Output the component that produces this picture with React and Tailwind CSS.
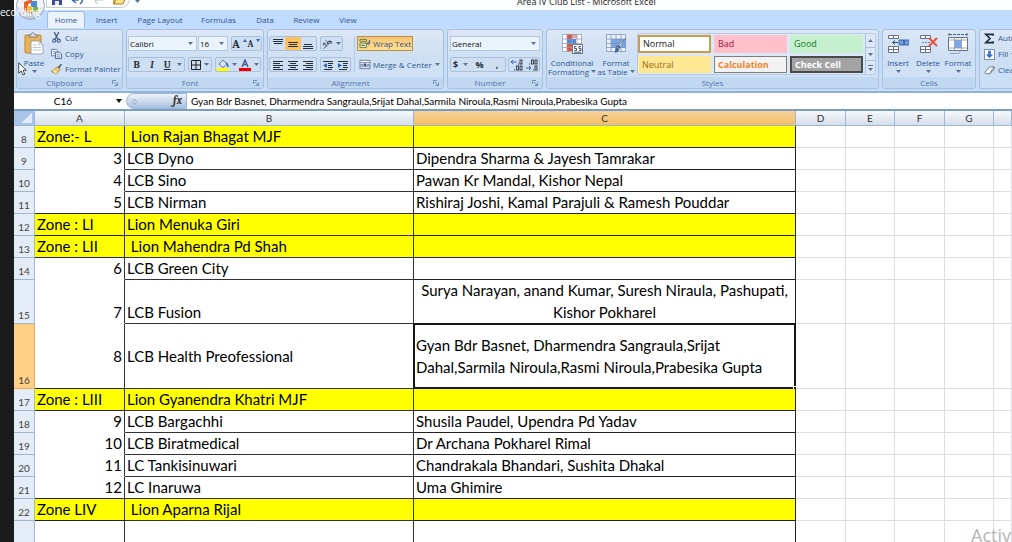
import React from "react";

const zones = [
  { n: 8, zone: true, a: "Zone:- L", b: " Lion Rajan Bhagat MJF", c: "" },
  { n: 9, a: "3", b: "LCB Dyno", c: "Dipendra Sharma & Jayesh Tamrakar" },
  { n: 10, a: "4", b: "LCB Sino", c: "Pawan Kr Mandal, Kishor Nepal" },
  { n: 11, a: "5", b: "LCB Nirman", c: "Rishiraj Joshi, Kamal Parajuli & Ramesh Pouddar", last: true },
  { n: 12, zone: true, a: "Zone : LI", b: "Lion Menuka Giri", c: "" },
  { n: 13, zone: true, a: "Zone : LII", b: " Lion Mahendra Pd Shah", c: "" },
  { n: 14, a: "6", b: "LCB Green City", c: "" },
  { n: 15, a: "7", b: "LCB Fusion", c: "Surya Narayan, anand Kumar, Suresh Niraula, Pashupati, Kishor Pokharel", tall: "h-[44px]", center: true },
  { n: 16, a: "8", b: "LCB Health Preofessional", c: "Gyan Bdr Basnet, Dharmendra Sangraula,Srijat Dahal,Sarmila Niroula,Rasmi Niroula,Prabesika Gupta", tall: "h-[65px]", active: true, last: true },
  { n: 17, zone: true, a: "Zone : LIII", b: "Lion Gyanendra Khatri MJF", c: "" },
  { n: 18, a: "9", b: "LCB Bargachhi", c: "Shusila Paudel, Upendra Pd Yadav" },
  { n: 19, a: "10", b: "LCB Biratmedical", c: "Dr Archana Pokharel Rimal" },
  { n: 20, a: "11", b: "LC Tankisinuwari", c: "Chandrakala Bhandari, Sushita Dhakal" },
  { n: 21, a: "12", b: "LC Inaruwa", c: "Uma Ghimire", last: true },
  { n: 22, zone: true, a: "Zone LIV", b: " Lion Aparna Rijal", c: "" },
  { n: "", a: "", b: "", c: "", tall: "h-[44px]" },
];

function Caret({ className = "" }) {
  return (
    <svg viewBox="0 0 5 3" className={`h-[3px] w-[5px] shrink-0 ${className}`} aria-hidden="true">
      <path d="M0 0h5L2.500 3z" fill="#5c7196" />
    </svg>
  );
}

function Group({ label, className, launcher, children }) {
  return (
    <section
      aria-label={label}
      className={`flex shrink-0 flex-col overflow-hidden rounded-[3px] border border-[#a6c0e0] bg-gradient-to-b from-[#dbe7f6] via-[#cddff3] to-[#d3e4f8] ${className}`}
    >
      <div className="flex min-h-0 flex-1">{children}</div>
      <div className="flex h-[11px] items-center bg-[#c1d8f1] text-[#5576aa]">
        <span className="flex-1 text-center leading-[11px]">{label}</span>
        {launcher && (
          <button aria-label={`${label} options`} className="mr-1">
            <svg viewBox="0 0 6 6" className="h-[6px] w-[6px]">
              <path d="M.5 4V.5H4M2 2l3 3M5.500 2.500v3h-3" fill="none" stroke="#7590b8" />
            </svg>
          </button>
        )}
      </div>
    </section>
  );
}

function Box({ className = "", children }) {
  return (
    <div className={`flex h-[15px] shrink-0 items-stretch rounded-[2px] border border-[#a9bfdc] bg-[#cfdff2] ${className}`}>
      {children}
    </div>
  );
}

function Tool({ label, className = "", children }) {
  return (
    <button aria-label={label} className={`flex flex-1 items-center justify-center gap-[3px] ${className}`}>
      {children}
    </button>
  );
}

function Lines({ rows }) {
  return (
    <svg viewBox="0 0 12 12" className="h-[12px] w-[12px]" aria-hidden="true">
      {rows.map(([x, y, w]) => (
        <rect key={y} x={x} y={y} width={w} height="1" fill="#25303f" />
      ))}
    </svg>
  );
}

function Indent({ flip }) {
  return (
    <svg viewBox="0 0 12 12" className="h-[12px] w-[12px]" aria-hidden="true">
      <path d="M1 2.500h10M6 4.500h5M6 6.500h4M6 8.500h5M2 10.500h8" stroke="#25303f" fill="none" />
      <path d={flip ? "M1 4l4 2.500L1 9z" : "M5 4L1 6.500 5 9z"} fill="#3563b5" />
    </svg>
  );
}

function SheetIcon({ kind }) {
  return (
    <svg viewBox="0 0 22 22" className="h-[22px] w-[22px]" aria-hidden="true">
      {kind === "cond" && (
        <>
          <rect x="1.500" y="1.500" width="19" height="17" fill="#fff" />
          <path d="M6 1h5v5H6zM6 11h5v7H6z" fill="#e4513f" />
          <path d="M6 6h9v5H6z" fill="#4f86dc" />
          <path d="M11 1h5v4h-5zM11 14h4v4h-4z" fill="#f0a297" />
          <path d="M1.500 1.500h19v17h-19zM1.500 6h19M1.500 10.500h19M1.500 14.500h19M6 1.500v17M11 1.500v17M16 1.500v17" fill="none" stroke="#909db8" strokeWidth=".8" />
          <rect x="11.500" y="11.500" width="10" height="9" fill="#fff" stroke="#69758b" />
          <path d="M15.500 13.500h-2v2h2v2h-2M20 13.500h-2v2h2v2h-2M13 19.200h7" fill="none" stroke="#333d50" strokeWidth=".9" />
        </>
      )}
      {kind === "table" && (
        <>
          <rect x="1.500" y="1.500" width="19" height="17" fill="#e9f1fb" />
          <path d="M6 6h15v9H6z" fill="#78a7e8" />
          <path d="M1.500 1.500h19v17h-19zM1.500 6h19M1.500 10.500h19M1.500 14.500h19M6 1.500v17M11 1.500v17M16 1.500v17" fill="none" stroke="#8095bb" strokeWidth=".8" />
          <path d="M21 5l-6 9-2-1z" fill="#e7e9ef" stroke="#66738b" strokeWidth=".7" />
          <path d="M15 13c0 4-2 6-5 7 0-3 0-6 3-8z" fill="#43689f" />
          <path d="M12 14l2 2" stroke="#d9a05c" />
        </>
      )}
      {kind === "insert" && (
        <>
          <path d="M1.500 2.500h10v3h-10zM6.500 2.500v3M1.500 13.500h10v6h-10zM6.500 13.500v6M1.500 16.500h10" fill="#fff" stroke="#63718a" />
          <path d="M12 7h10v5H12z" fill="#6f9be0" stroke="#3d68b2" />
          <path d="M11 9.500H6M8 7.500L5.500 9.500 8 11.500M17 7v5" fill="none" stroke="#31466d" />
        </>
      )}
      {kind === "delete" && (
        <>
          <path d="M3.500 2.500h10v3h-10zM8.500 2.500v3M3.500 13.500h10v6h-10zM8.500 13.500v6M3.500 16.500h10" fill="#fff" stroke="#63718a" />
          <path d="M5 9.500h9" stroke="#7184a5" strokeDasharray="2 1" />
          <path d="M12 5l8 8M20 5l-8 8" stroke="#ee4936" strokeWidth="1.800" />
        </>
      )}
      {kind === "format" && (
        <>
          <path d="M2 1.500h18M2 0v3M20 0v3" stroke="#535f74" strokeDasharray="3 1" />
          <path d="M1.500 4.500h19v13h-19z" fill="#fff" stroke="#63718a" />
          <path d="M8 7h6v8H8z" fill="#7ca6ec" />
          <path d="M1.500 7h19M1.500 15h19M7.500 4.500v13M14.500 4.500v13M3 20.500h9l1-2" fill="none" stroke="#8796b0" strokeWidth=".8" />
        </>
      )}
    </svg>
  );
}

function BigButton({ kind, lines, caretBelow, className }) {
  return (
    <button className={`flex flex-col items-center pt-[3px] leading-[9px] text-[#2f5591] ${className}`}>
      <SheetIcon kind={kind} />
      <span className="mt-[3px] whitespace-nowrap">{lines[0]}</span>
      {caretBelow ? (
        <Caret className="mt-[3px]" />
      ) : (
        <span className="flex items-center gap-[2px] whitespace-nowrap">
          {lines[1]}
          <Caret />
        </span>
      )}
    </button>
  );
}

function SmallButton({ icon, caret, children }) {
  return (
    <button className="flex h-[16px] items-center gap-[3px] whitespace-nowrap text-[#2f5591]">
      <svg viewBox="0 0 12 12" className="h-[11px] w-[11px]" aria-hidden="true">{icon}</svg>
      {children}
      {caret && <Caret />}
    </button>
  );
}

function Combo({ label, value, options, className }) {
  return (
    <label className={`relative flex h-[15px] shrink-0 items-center border border-[#b4c8e2] bg-[#eaf2fb] ${className}`}>
      <span className="sr-only">{label}</span>
      <select defaultValue={value} className="h-full w-full appearance-none bg-transparent pl-px leading-[13px] text-[#111]">
        {options.map((o) => (
          <option key={o}>{o}</option>
        ))}
      </select>
      <Caret className="pointer-events-none absolute right-[3px]" />
    </label>
  );
}

function Decimals({ more }) {
  return (
    <svg viewBox="0 0 14 12" className="h-[12px] w-[14px]" aria-hidden="true">
      <g fill="none" stroke="#25303f" strokeWidth=".9">
        <rect x="10" y="1" width="2" height="4" />
        {!more && <rect x="6.500" y="1" width="2" height="4" />}
        <rect x="10" y="7" width="2" height="4" />
        {more && <rect x="6.500" y="7" width="2" height="4" />}
      </g>
      <path d={more ? "M8 4.500h1v1H8zM4 10.500h1v1H4z" : "M4 4.500h1v1H4zM8 10.500h1v1H8z"} fill="#25303f" />
      <path d={more ? "M6.500 3H1M3 1L1 3l2 2" : "M1 9h5M4 7l2 2-2 2"} fill="none" stroke="#3563b5" />
    </svg>
  );
}

const styles = [
  ["Normal", "bg-white text-[#222] border-2 border-[#c99c4c]"],
  ["Bad", "bg-[#ffc0cb] text-[#a8123a] border border-[#ffc0cb]"],
  ["Good", "bg-[#c6efce] text-[#137a2a] border border-[#c6efce]"],
  ["Neutral", "bg-[#ffe794] text-[#976b12] border border-[#ffe794]"],
  ["Calculation", "bg-[#f2f2f2] text-[#f5821f] font-bold border border-[#7f7f7f]"],
  ["Check Cell", "bg-[#a3a3a3] text-white font-bold border-2 border-[#4a4a4a]"],
];

function Ribbon() {
  return (
    <div className="flex h-[63px] shrink-0 gap-[3px] bg-[#c8dcf4] pb-[2px] pl-[2px] pt-px">
      <Group label="Clipboard" launcher className="w-[107px]">
        <button className="flex w-[34px] flex-col items-center pt-[2px] leading-[9px] text-[#2f5591]">
          <svg viewBox="0 0 20 23" className="h-[23px] w-[20px]" aria-hidden="true">
            <rect x="1" y="3" width="16" height="18" rx="1" fill="#e9b254" stroke="#b98133" />
            <path d="M5 5V3h2c0-3 4-3 4 0h2v2z" fill="#d8dce3" stroke="#6b7280" strokeWidth=".8" />
            <path d="M7 9h8l4 4v9H7z" fill="#fff" stroke="#8694ab" strokeWidth=".8" />
            <path d="M15 9v4h4M9 13h4M9 15.500h8M9 18h8" fill="none" stroke="#a9b6ca" strokeWidth=".8" />
          </svg>
          <span className="mt-[3px]">Paste</span>
          <Caret className="mt-[3px]" />
        </button>
        <div className="flex flex-col">
          <SmallButton icon={<><path d="M3.500 0l4 8M8.500 0l-4 8" stroke="#3a5688" strokeWidth="1.300" /><circle cx="3.500" cy="9.500" r="1.700" fill="none" stroke="#3b5f9f" strokeWidth="1.300" /><circle cx="8.500" cy="9.500" r="1.700" fill="none" stroke="#3b5f9f" strokeWidth="1.300" /></>}>Cut</SmallButton>
          <SmallButton icon={<><path d="M.5 1.500h5l2 2v5h-7z" fill="#fff" stroke="#5673a5" /><path d="M5 4.500h4l2.500 2v5H5z" fill="#e4edfa" stroke="#425f93" /><path d="M2 4h3M2 6h2M6.500 7.500h3M6.500 9.500h3" stroke="#6684b8" /></>}>Copy</SmallButton>
          <SmallButton icon={<><path d="M11.500 0L7 4l1.500 1.500z" fill="#5e6e96" stroke="#4a5875" /><path d="M7 3l3 3-4 5-6-3c3-1 4-3 7-5z" fill="#eac867" stroke="#9a7635" strokeWidth=".7" /><path d="M3 7l3 3" stroke="#fff6cf" strokeWidth="1.500" /></>}>Format Painter</SmallButton>
        </div>
      </Group>

      <Group label="Font" launcher className="w-[138px]">
        <div className="flex flex-col gap-[6px] pl-px pt-[6px]">
          <div className="flex gap-px">
            <Combo label="Font name" value="Calibri" options={["Calibri", "Arial", "Cambria"]} className="w-[69px]" />
            <Combo label="Font size" value="16" options={["11", "14", "16"]} className="w-[30px]" />
            <Box className="ml-[2px] w-[31px]">
              <Tool label="Grow font"><span className="font-serif text-[12px] font-bold leading-[12px] text-[#25303f]">A</span><svg viewBox="0 0 4 3" className="mb-[6px] h-[3px] w-[4px]"><path d="M0 3h4L2 0z" fill="#3563b5" /></svg></Tool>
              <Tool label="Shrink font"><span className="font-serif text-[9px] font-bold leading-[12px] text-[#25303f]">A</span><svg viewBox="0 0 4 3" className="mb-[6px] h-[3px] w-[4px]"><path d="M0 0h4L2 3z" fill="#3563b5" /></svg></Tool>
            </Box>
          </div>
          <div className="flex gap-[3px] text-[#25303f]">
            <Box className="w-[57px] font-serif text-[10px] leading-[12px]">
              <Tool label="Bold"><b>B</b></Tool>
              <Tool label="Italic"><i className="font-bold">I</i></Tool>
              <Tool label="Underline"><u className="font-bold">U</u></Tool>
              <Tool label="Underline styles" className="max-w-[9px]"><Caret /></Tool>
            </Box>
            <Box className="w-[24px]">
              <Tool label="Borders">
                <svg viewBox="0 0 10 10" className="h-[10px] w-[10px]"><path d="M.5.5h9v9h-9zM5 .5v9M.5 5h9" fill="none" stroke="#222" /></svg>
                <Caret />
              </Tool>
            </Box>
            <Box className="w-[46px]">
              <Tool label="Fill color">
                <svg viewBox="0 0 12 12" className="h-[12px] w-[12px]"><path d="M2 5l4-4 4 4-4 3.500z" fill="#dce8f7" stroke="#5b76a6" /><path d="M9 4c2 1 2 2 2 4" stroke="#3467b4" strokeWidth="1.500" fill="none" /><rect y="9" width="12" height="3" fill="#ffff00" /></svg>
                <Caret />
              </Tool>
              <Tool label="Font color">
                <svg viewBox="0 0 12 12" className="h-[12px] w-[12px]"><path d="M3 8l3-7 3 7M4 5.500h4" fill="none" stroke="#3f5d92" strokeWidth="1.400" /><rect y="9" width="12" height="3" fill="#f00000" /></svg>
                <Caret />
              </Tool>
            </Box>
          </div>
        </div>
      </Group>

      <Group label="Alignment" launcher className="w-[177px]">
        <div className="flex flex-1 pl-px pt-[6px]">
          <div className="flex flex-col gap-[6px]">
            <div className="flex gap-[3px]">
              <Box className="w-[48px]">
                <Tool label="Top align"><Lines rows={[[1, 1, 10], [1, 3, 10], [2, 5, 8]]} /></Tool>
                <Tool label="Middle align" className="bg-[#ffc15f]"><Lines rows={[[1, 4, 10], [2, 6, 8], [1, 8, 10]]} /></Tool>
                <Tool label="Bottom align"><Lines rows={[[2, 6, 8], [1, 8, 10], [1, 10, 10]]} /></Tool>
              </Box>
              <Box className="w-[23px]">
                <Tool label="Orientation">
                  <svg viewBox="0 0 12 12" className="h-[12px] w-[11px]"><path d="M2 11l8-8M10 3v3M10 3H7M1 4.500l4 4M1.500 7.500c0-2 2-3 3-1.500M4 2l4 4M6 6c-1-2 2-4 3-2" fill="none" stroke="#33425c" /></svg>
                  <Caret />
                </Tool>
              </Box>
            </div>
            <div className="flex gap-[3px]">
              <Box className="w-[48px]">
                <Tool label="Align left"><Lines rows={[[1, 2, 10], [1, 4, 7], [1, 6, 10], [1, 8, 7], [1, 10, 10]]} /></Tool>
                <Tool label="Center"><Lines rows={[[1, 2, 10], [3, 4, 6], [1, 6, 10], [3, 8, 6], [1, 10, 10]]} /></Tool>
                <Tool label="Align right"><Lines rows={[[1, 2, 10], [4, 4, 7], [1, 6, 10], [4, 8, 7], [1, 10, 10]]} /></Tool>
              </Box>
              <Box className="w-[31px]">
                <Tool label="Decrease indent"><Indent /></Tool>
                <Tool label="Increase indent"><Indent flip /></Tool>
              </Box>
            </div>
          </div>
          <div className="ml-[3px] h-[36px] w-px bg-[#b3c8e4]" />
          <div className="ml-[2px] flex flex-col items-start gap-[6px] text-[#2f5591]">
            <button className="flex h-[15px] items-center gap-[2px] whitespace-nowrap border border-[#b98f4f] bg-gradient-to-b from-[#f6c472] to-[#ffe08d] px-px">
              <svg viewBox="0 0 12 12" className="h-[11px] w-[12px]" aria-hidden="true"><path d="M.5 1.500h7v2h-7zM.5 5.500h7v5h-7z" fill="#e9efb0" stroke="#667534" /><path d="M11 2v4H9M10 4L8.500 6 10 8M2 8h4" fill="none" stroke="#33518d" /></svg>
              Wrap Text
            </button>
            <button className="flex h-[15px] items-center gap-[2px] whitespace-nowrap pl-[2px]">
              <svg viewBox="0 0 12 12" className="h-[11px] w-[12px]" aria-hidden="true"><path d="M.5 1.500h11v9H.5zM.5 4h11M.5 8.500h11" fill="#fff" stroke="#6c7f9f" /><path d="M1 4.500h10v3.500H1z" fill="#c8dcf4" /><path d="M1 6.500h3M11 6.500H8" stroke="#234a98" /><path d="M5 8l1-3 1 3" stroke="#222" fill="none" /></svg>
              Merge &amp; Center
              <Caret className="ml-px" />
            </button>
          </div>
        </div>
      </Group>

      <Group label="Number" launcher className="w-[96px]">
        <div className="flex flex-col gap-[6px] pl-[2px] pt-[6px]">
          <Combo label="Number format" value="General" options={["General", "Number", "Currency"]} className="w-[90px]" />
          <div className="flex gap-[2px] text-[9px] font-bold leading-[12px] text-[#25303f]">
            <Box className="w-[56px]">
              <Tool label="Accounting format">$<Caret className="ml-[2px]" /></Tool>
              <Tool label="Percent style">%</Tool>
              <Tool label="Comma style" className="max-w-[16px]">,</Tool>
            </Box>
            <Box className="w-[32px]">
              <Tool label="Increase decimal"><Decimals more /></Tool>
              <Tool label="Decrease decimal"><Decimals /></Tool>
            </Box>
          </div>
        </div>
      </Group>

      <Group label="Styles" className="min-w-[333px] max-w-[333px]">
        <BigButton kind="cond" lines={["Conditional", "Formatting"]} className="w-[50px]" />
        <BigButton kind="table" lines={["Format", "as Table"]} className="w-[38px]" />
        <div className="ml-[2px] mt-[3px] flex h-[42px] rounded-[2px] border border-[#b6cbe6] bg-[#dbe8f7]">
          <div className="grid grid-cols-3 gap-x-[3px] gap-y-[3px] py-px pr-[2px] text-[9px] leading-[11px]">
            {styles.map(([name, look]) => (
              <button key={name} className={`flex w-[73px] items-center whitespace-nowrap pl-[3px] ${look}`}>
                {name}
              </button>
            ))}
          </div>
          <div className="flex w-[10px] flex-col divide-y divide-[#a9c0de] border-l border-[#a9c0de]">
            <Tool label="Previous styles"><Caret className="rotate-180" /></Tool>
            <Tool label="Next styles"><Caret /></Tool>
            <Tool label="More styles" className="flex-col">
              <svg viewBox="0 0 5 6" className="h-[6px] w-[5px]"><path d="M0 0h5v1H0zM0 3h5L2.500 6z" fill="#5c7196" /></svg>
            </Tool>
          </div>
        </div>
      </Group>

      <Group label="Cells" className="w-[94px]">
        <div className="flex">
          <BigButton kind="insert" lines={["Insert"]} caretBelow className="w-[30px]" />
          <BigButton kind="delete" lines={["Delete"]} caretBelow className="w-[30px]" />
          <BigButton kind="format" lines={["Format"]} caretBelow className="w-[30px]" />
        </div>
      </Group>

      <section aria-label="Editing" className="min-w-0 flex-1 overflow-hidden rounded-l-[3px] border border-r-0 border-[#a6c0e0] bg-gradient-to-b from-[#dbe7f6] via-[#cddff3] to-[#c9def6] pl-[4px]">
        <SmallButton icon={<path d="M10 3V1.500H2L6.500 6 2 10.500h8V9" fill="none" stroke="#1f2a3c" strokeWidth="1.700" />}>AutoSum</SmallButton>
        <SmallButton caret icon={<><path d="M.5.5h11v11H.5z" fill="#fff" stroke="#6580ad" /><path d="M4.500 2h3v4h2.500L6 10 2 6h2.500z" fill="#356fd0" /></>}>Fill</SmallButton>
        <SmallButton caret icon={<path d="M1 8l5-6h5L6 9.500H2zM6 9.500L11 5V2" fill="#fff" stroke="#5d6c87" />}>Clear</SmallButton>
      </section>
    </div>
  );
}

function TitleBar() {
  return (
    <header className="relative flex h-[10px] shrink-0 justify-center bg-[#fcfdfe]">
      <div className="absolute -top-[10px] left-[32px] flex h-[18px] w-[84px] items-end gap-[9px] rounded-r-full border border-[#c5cbd6] bg-white pb-[2px] pl-[5px]">
        <svg viewBox="0 0 10 10" className="h-[10px] w-[10px]" aria-hidden="true"><path d="M0 0h10v10H0z" fill="#404a9c" /><path d="M2 0h6v4H2zM3 6h4v4H3z" fill="#e9ecfa" /></svg>
        <svg viewBox="0 0 14 10" className="h-[10px] w-[14px]" aria-hidden="true"><path d="M1 5h6c4-3 6 1 2 4M1 5l4-3M1 5l4 3" fill="none" stroke="#3e63b6" strokeWidth="1.500" /></svg>
        <svg viewBox="0 0 14 10" className="h-[10px] w-[10px]" aria-hidden="true"><path d="M13 5H5C1 5 1 8 5 10" fill="none" stroke="#b7bfce" strokeWidth="1.600" /></svg>
        <svg viewBox="0 0 12 10" className="h-[10px] w-[12px]" aria-hidden="true"><path d="M0 9V1h4l1 2h5v2z" fill="#efc05a" stroke="#a9792a" /><path d="M1 9l2-5h9l-2 5z" fill="#ffe08b" stroke="#a9792a" /></svg>
      </div>
      <Caret className="absolute left-[121px] top-0" />
      <h1 className="absolute -top-[4px] left-[503px] whitespace-nowrap text-[9px] leading-[12px] text-[#222]">Area IV Club List - Microsoft Excel</h1>
      <button aria-label="Office menu" className="absolute -top-[9px] left-[2px] z-10 h-[29px] w-[29px] rounded-full border border-[#9aa6b8] bg-gradient-to-b from-[#dfe4ec] via-[#f4f6f9] to-[#b9c3d2]">
        <svg viewBox="0 0 18 18" className="mx-auto h-[18px] w-[18px]" aria-hidden="true">
          <path d="M2 5l8-3v4L6 7v6l4 1v3l-8-3z" fill="#e8622c" />
          <path d="M9 4h6v6H9z" fill="#4b87d8" />
          <path d="M5 9h5v6H5z" fill="#f6b53d" />
          <path d="M11 10h5v5h-5z" fill="#7cb443" />
        </svg>
      </button>
    </header>
  );
}

const tabs = [
  ["Home", "w-[38px] rounded-t-[3px] border border-b-0 border-[#9dbce2] bg-[#eaf2fc]"],
  ["Insert", "w-[43px]"],
  ["Page Layout", "w-[64px]"],
  ["Formulas", "w-[53px]"],
  ["Data", "w-[40px]"],
  ["Review", "w-[43px]"],
  ["View", "w-[40px]"],
];

function Sheet() {
  const cell = "border-r border-b px-[2px] overflow-hidden";
  const grid = "border-r border-b border-[#dcdde8]";
  const head = "h-[15px] border-r border-b border-[#9eb6ce] p-0 text-[10px] font-normal leading-[14px] text-[#333]";
  return (
    <table className="w-full shrink-0 table-fixed border-separate border-spacing-0 font-[Lato,'Liberation_Sans',sans-serif]">
      <colgroup>
        <col className="w-[21px]" />
        <col className="w-[90px]" />
        <col className="w-[289px]" />
        <col className="w-[382px]" />
        <col className="w-[50px]" />
        <col className="w-[49px]" />
        <col className="w-[50px]" />
        <col className="w-[49px]" />
        <col />
      </colgroup>
      <thead>
        <tr>
          <th className={`${head} bg-[#a9c4e9]`}>
            <svg viewBox="0 0 20 14" className="ml-auto h-[14px] w-[20px]" role="img" aria-label="Select all"><path d="M18 2v10H7z" fill="#e3ecf8" /></svg>
          </th>
          {["A", "B", "C", "D", "E", "F", "G", ""].map((c) => (
            <th key={c} scope="col" className={`${head} ${c === "C" ? "bg-gradient-to-b from-[#f8d29b] to-[#f1be63]" : "bg-gradient-to-b from-[#f6f9fc] to-[#d6deea]"}`}>
              {c}
            </th>
          ))}
        </tr>
      </thead>
      <tbody className="text-[15px] leading-[21px] text-black">
        {zones.map((r) => {
          const fill = r.zone ? "bg-[#ffff00]" : "bg-white";
          const va = r.active ? "align-middle" : "align-bottom";
          const below = r.zone || r.last ? "border-b-[#222]" : "border-b-transparent";
          return (
            <tr key={r.n} className={r.tall || "h-[22px]"}>
              <th scope="row" className={`border-r border-b p-0 align-bottom text-[10px] font-normal leading-[16px] text-[#444] ${r.active ? "border-[#e9a95a] bg-[#ffcf86]" : "border-[#9eb6ce] bg-[#e4ecf7]"}`}>
                {r.n}
              </th>
              <td className={`${cell} ${fill} ${va} border-r-[#333] ${below} ${r.zone ? "" : "text-right"}`}>{r.a}</td>
              <td className={`${cell} ${fill} ${va} whitespace-pre border-[#333]`}>{r.b}</td>
              <td className={`relative border-b border-r border-[#222] px-[2px] ${fill} ${va} ${r.center ? "text-center" : ""}`}>
                {r.tall && r.c ? <span className="-mt-px block leading-[22px]">{r.c}</span> : r.c}
                {r.active && (
                  <span className="pointer-events-none absolute -inset-px border-2 border-[#161616]">
                    <span className="absolute -bottom-[3px] -right-[3px] h-[4px] w-[4px] border border-white bg-[#161616]" />
                  </span>
                )}
              </td>
              <td className={grid} />
              <td className={grid} />
              <td className={grid} />
              <td className={grid} />
              <td className={grid} />
            </tr>
          );
        })}
      </tbody>
    </table>
  );
}

export default function App() {
  return (
    <div className="relative flex h-screen overflow-hidden bg-white font-['Open_Sans','Noto_Sans',sans-serif] text-[8px] font-normal">
      <aside className="w-[14px] shrink-0 bg-[#1b1b1b]" />
      <p className="absolute left-0 top-[5px] z-20 text-[10px] leading-[14px] text-white">ecording</p>
      <main className="flex min-w-0 flex-1 flex-col">
        <TitleBar />
        <nav role="tablist" className="flex h-[18px] shrink-0 items-end bg-[#bfdbff] pl-[33px] text-[#2f5591]">
          {tabs.map(([name, look]) => (
            <button key={name} role="tab" aria-selected={name === "Home"} className={`h-[17px] whitespace-nowrap text-center leading-[16px] ${look}`}>
              {name}
            </button>
          ))}
        </nav>
        <Ribbon />
        <div className="flex h-[20px] shrink-0 items-stretch border-b-2 border-t-2 border-b-[#7b9cc6] border-t-[#8fb4d9] bg-white font-[Lato,'Liberation_Sans',sans-serif] text-[10px] text-black">
          <input aria-label="Name box" defaultValue="C16" className="w-[98px] text-center" />
          <button aria-label="Cell names" className="flex w-[14px] items-center justify-center">
            <svg viewBox="0 0 6 4" className="h-[4px] w-[6px]"><path d="M0 0h6L3 4z" fill="#111" /></svg>
          </button>
          <div className="flex w-[61px] items-center justify-between rounded-l-full border border-[#9fb6d5] bg-gradient-to-b from-[#eef3fa] to-[#a9c1e2] pl-[5px] pr-[4px]">
            <span className="h-[5px] w-[5px] rounded-full border border-[#a3b2ca]" />
            <button aria-label="Insert function" className="font-serif text-[11px] font-bold italic leading-[14px] text-[#333]">fx</button>
          </div>
          <input aria-label="Formula" defaultValue="Gyan Bdr Basnet, Dharmendra Sangraula,Srijat Dahal,Sarmila Niroula,Rasmi Niroula,Prabesika Gupta" className="min-w-0 flex-1 pl-[4px]" />
        </div>
        <Sheet />
      </main>
      <svg viewBox="0 0 9 14" className="absolute left-[18px] top-[62px] h-[14px] w-[9px]" aria-hidden="true">
        <path d="M.7.800v10.500l2.500-2.300 1.800 4 1.800-.8L5 8.300h3.300z" fill="#fff" stroke="#222" strokeWidth=".8" />
      </svg>
      <p className="absolute -bottom-[6px] left-[971px] whitespace-nowrap text-[18px] font-normal leading-[26px] text-[#b5b5b5]">Activate Windows</p>
    </div>
  );
}
